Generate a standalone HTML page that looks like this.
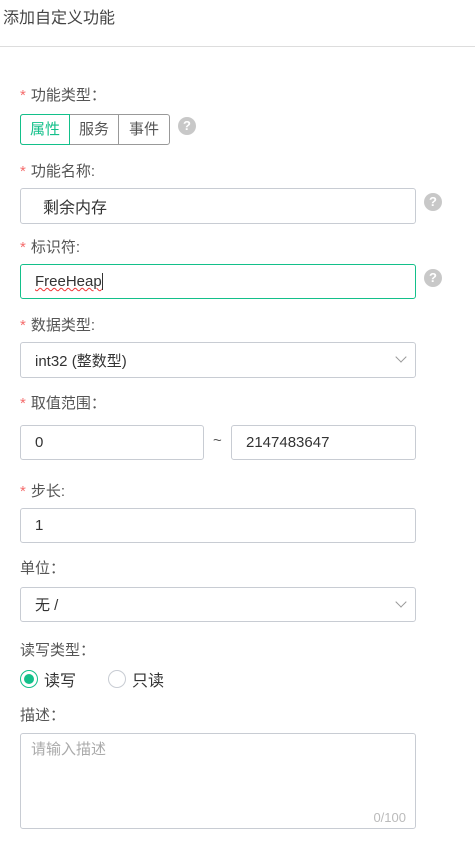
<!DOCTYPE html>
<html><head><meta charset="utf-8"><style>
*{box-sizing:border-box;margin:0;padding:0}
body{width:475px;height:844px;background:#fff;position:relative;overflow:hidden;font-family:"Liberation Sans","Noto Sans CJK SC",sans-serif;color:#333}
.a{position:absolute;white-space:nowrap}
.t{position:absolute;font-size:15px;color:#555;line-height:20px}
.t b{color:#f56c6c;font-weight:normal;margin-right:5px}
.in{position:absolute;border:1px solid #c8ccd3;border-radius:3px;background:#fff;font-size:15px;color:#333;padding-left:14px;display:flex;align-items:center}
.q{position:absolute;width:18px;height:18px;border-radius:50%;background:#c8c8c8;color:#fff;font-size:13px;font-weight:bold;text-align:center;line-height:18px}
.chev{position:absolute;right:6px;top:11px;width:8px;height:8px;border-right:1px solid #999;border-bottom:1px solid #999;transform:rotate(45deg)}
</style></head><body>
<div class="a" style="left:3px;top:4px;font-size:16px;color:#444">添加自定义功能</div>
<div class="a" style="left:0;top:46px;width:475px;height:1px;background:#ddd"></div>

<div class="t" style="left:20px;top:86px"><b>*</b>功能类型：</div>
<div class="a" style="left:20px;top:114px;width:150px;height:31px;border:1px solid #999;border-radius:3px;font-size:15px;color:#555;display:flex">
<div style="width:50px;border:1px solid #13c08a;margin:-1px;border-radius:3px 0 0 3px;color:#13c08a;text-align:center;line-height:29px">属性</div>
<div style="width:49px;border-right:1px solid #999;text-align:center;line-height:29px;margin-left:1px">服务</div>
<div style="flex:1;text-align:center;line-height:29px">事件</div>
</div>
<div class="q" style="left:178px;top:117px">?</div>

<div class="t" style="left:20px;top:162px"><b>*</b>功能名称:</div>
<div class="in" style="left:20px;top:188px;width:396px;height:36px;padding-left:22px;font-size:16px">剩余内存</div>
<div class="q" style="left:424px;top:193px">?</div>

<div class="t" style="left:20px;top:238px"><b>*</b>标识符:</div>
<div class="in" style="left:20px;top:264px;width:396px;height:35px;border-color:#13c08a"><span style="text-decoration:underline wavy #e33;text-decoration-thickness:1px">FreeHeap</span><span style="display:inline-block;width:1px;height:17px;background:#333"></span></div>
<div class="q" style="left:424px;top:269px">?</div>

<div class="t" style="left:20px;top:316px"><b>*</b>数据类型:</div>
<div class="in" style="left:20px;top:342px;width:396px;height:36px">int32 (整数型)<div class="chev" style="right:10px;top:10px"></div></div>

<div class="t" style="left:20px;top:394px"><b>*</b>取值范围：</div>
<div class="in" style="left:20px;top:425px;width:184px;height:35px">0</div>
<div class="a" style="left:213px;top:432px;font-size:15px;color:#555">~</div>
<div class="in" style="left:231px;top:425px;width:185px;height:35px">2147483647</div>

<div class="t" style="left:20px;top:482px"><b>*</b>步长:</div>
<div class="in" style="left:20px;top:508px;width:396px;height:35px">1</div>

<div class="t" style="left:20px;top:559px">单位：</div>
<div class="in" style="left:20px;top:587px;width:396px;height:35px">无 /<div class="chev" style="right:10px;top:10px"></div></div>

<div class="t" style="left:20px;top:641px">读写类型：</div>
<div class="a" style="left:20px;top:670px;width:18px;height:18px;border:1px solid #13c08a;border-radius:50%"><div style="position:absolute;left:3px;top:3px;width:10px;height:10px;border-radius:50%;background:#13c08a"></div></div>
<div class="a" style="left:44px;top:667px;font-size:16px;color:#333">读写</div>
<div class="a" style="left:108px;top:670px;width:18px;height:18px;border:1px solid #c8ccd3;border-radius:50%"></div>
<div class="a" style="left:132px;top:667px;font-size:16px;color:#333">只读</div>

<div class="t" style="left:20px;top:706px">描述：</div>
<div class="a" style="left:20px;top:733px;width:396px;height:96px;border:1px solid #c8ccd3;border-radius:3px">
<div class="a" style="left:10px;top:4px;font-size:15px;color:#aaa">请输入描述</div>
<div class="a" style="right:9px;top:76px;font-size:13px;color:#bbb">0/100</div>
</div>
</body></html>
